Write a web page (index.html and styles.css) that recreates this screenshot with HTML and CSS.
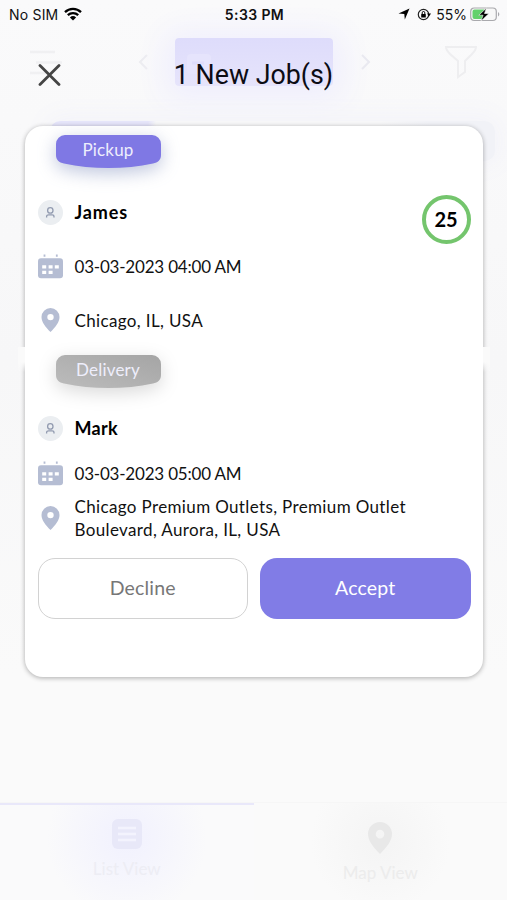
FILE: index.html
```
<!DOCTYPE html>
<html lang="en">
<head>
  <meta charset="UTF-8">
  <meta name="viewport" content="width=device-width, initial-scale=1.0">
  <title>New Jobs</title>
  <link rel="stylesheet" href="styles.css">
</head>
<body>
  <svg class="defs" width="0" height="0">
    <symbol id="user" viewBox="0 0 25 25">
      <circle cx="12.5" cy="12.5" r="12.5" fill="#ebeef1"/>
      <g fill="none" stroke="#929bb0" stroke-width="1.3">
        <circle cx="12.3" cy="10.4" r="2.7"/>
        <path d="M8.600 17.400v-.7c0-1.200.9-1.800 1.900-1.800h3.600c1 0 1.900.6 1.900 1.800v.7"/>
      </g>
    </symbol>
    <symbol id="calendar" viewBox="0 0 25 25">
      <path d="M6.500 .5v2.300M18.800 .5v2.300" stroke="#b5bdd3" stroke-width="1.800"/>
      <rect x="0" y="4.300" width="25" height="20" rx="3" fill="#b5bdd3"/>
      <path d="M4.200 11.300h4v3.200h-4zM10.600 11.300h4v3.200h-4zM16.800 11.300h4v3.200h-4zM4.200 16.800h4V20h-4zM10.600 16.800h4V20h-4z" fill="#fff"/>
    </symbol>
    <symbol id="pin" viewBox="0 0 18 24">
      <path fill-rule="evenodd" d="M9 0a9 9 0 0 0-9 9c0 5 4 10 9 15 5-5 9-10 9-15a9 9 0 0 0-9-9zm0 12.300a3.200 3.200 0 1 1 0-6.400 3.200 3.200 0 0 1 0 6.400z" fill="currentColor"/>
    </symbol>
  </svg>

  <div class="screen">
    <!-- job list screen, faded behind the popup -->
    <div class="behind">
      <div class="behind-header">
        <svg class="menu" width="34" height="26" viewBox="0 0 34 26"><path d="M1 2h25M7 12.500h26M1 23h16" stroke="#f0f0f2" stroke-width="2.500"/></svg>
        <svg class="prev" width="10" height="18" viewBox="0 0 10 18"><path d="M9 2L2 9l7 7" fill="none" stroke="#ececf0" stroke-width="2"/></svg>
        <div class="date-pill">
          <svg width="24" height="20" viewBox="0 0 24 20"><rect width="24" height="20" rx="4" fill="#e6e4fc"/><path d="M5 9h12" stroke="#dedcfb" stroke-width="3"/></svg>
        </div>
        <svg class="next" width="10" height="18" viewBox="0 0 10 18"><path d="M1 2l7 7-7 7" fill="none" stroke="#e9e9f0" stroke-width="2"/></svg>
        <svg class="filter" width="34" height="34" viewBox="0 0 34 34"><path d="M2 2h30c0 3-2 5-4 7l-7 7v11l-7 5V16L6 9C4 7 2 5 2 2z" fill="none" stroke="#eeeef0" stroke-width="2"/></svg>
      </div>
      <div class="behind-list"></div>
      <div class="tabs">
        <div class="tab active">
          <svg width="32" height="32" viewBox="0 0 32 32"><rect x="1" y="1" width="30" height="30" rx="6" fill="#e8e8f8"/><path d="M7 10h18M7 16h18M7 22h18" stroke="#f3f3fd" stroke-width="2.500"/></svg>
          <span>List View</span>
        </div>
        <div class="tab">
          <svg width="26" height="32"><use href="#pin"/></svg>
          <span>Map View</span>
        </div>
      </div>
    </div>

    <div class="popup">
      <div class="status">
        <div class="carrier">
          No SIM
          <svg width="18" height="14" viewBox="0 0 18 14"><path d="M1 5.200a11.500 11.500 0 0 1 16 0M3.800 8.200a7.500 7.500 0 0 1 10.400 0" fill="none" stroke="#000" stroke-width="2.300"/><path d="M5.900 10.400a4.500 4.500 0 0 1 6.200 0L9 13.600z"/></svg>
        </div>
        <div class="clock">5:33 PM</div>
        <div class="battery">
          <svg width="12" height="12" viewBox="0 0 12 12"><path d="M11.500 .5L6.800 11.500 6.300 6 .5 5.500z"/></svg>
          <svg class="lock" width="14" height="13" viewBox="0 0 14 13"><circle cx="6.500" cy="6.500" r="5.200" fill="none" stroke="#222" stroke-width="1.200"/><path d="M10 5.500h4l-2 3z"/><rect x="4.200" y="6" width="4.600" height="3.400" rx=".5"/><path d="M5.200 6V4.800a1.300 1.300 0 0 1 2.600 0V6" fill="none" stroke="#000"/></svg>
          <span>55%</span>
          <svg width="30" height="15" viewBox="0 0 30 15"><rect x=".7" y="1" width="25.600" height="12.500" rx="3.500" fill="#f8f8f8" stroke="#a9a9ad" stroke-width="1.200"/><path d="M4.500 2.500h9.500v9.500H4.500a2 2 0 0 1-2-2V4.500a2 2 0 0 1 2-2z" fill="#63d16c"/><path d="M28 5v4.500c1.800-.8 1.800-3.700 0-4.500z" fill="#a9a9ad"/><path d="M16.500 1L8.800 8.200h4.300L11 14l8-7.500h-4.500z" stroke="#fafafa" stroke-width=".6"/></svg>
        </div>
      </div>

      <div class="title-bar">
        <svg class="close" width="23" height="22" viewBox="0 0 23 22"><path d="M2 1.500l19 19M21 1.500l-19 19" stroke="#444" stroke-width="2.800" stroke-linecap="round"/></svg>
        <h1>1 New Job(s)</h1>
      </div>

      <div class="card">
        <div class="badge pickup">
          <svg width="105" height="34" viewBox="0 0 105 34"><path d="M9 0h87a9 9 0 0 1 9 9v11c0 5-3 7.500-8 8.500-28 6-61 6-89 0-5-1-8-3.500-8-8.500V9a9 9 0 0 1 9-9z" fill="#7f78e4"/></svg>
          <span>Pickup</span>
        </div>
        <div class="row">
          <svg width="25" height="25"><use href="#user"/></svg>
          <b class="james">James</b>
          <div class="timer">25</div>
        </div>
        <div class="row">
          <svg width="25" height="25"><use href="#calendar"/></svg>
          <span class="date">03-03-2023 04:00 AM</span>
        </div>
        <div class="row">
          <svg width="19" height="24"><use href="#pin"/></svg>
          <span class="place">Chicago, IL, USA</span>
        </div>
        <div class="badge delivery">
          <svg width="105" height="34" viewBox="0 0 105 34">
            <linearGradient id="grey" x1="0" y1="1" x2="1" y2="0"><stop offset="0" stop-color="#bcbcbc"/><stop offset="1" stop-color="#a5a5a5"/></linearGradient>
            <path d="M9 0h87a9 9 0 0 1 9 9v11c0 5-3 7.500-8 8.500-28 6-61 6-89 0-5-1-8-3.500-8-8.500V9a9 9 0 0 1 9-9z" fill="url(#grey)"/>
          </svg>
          <span>Delivery</span>
        </div>
        <div class="row">
          <svg width="25" height="25"><use href="#user"/></svg>
          <b>Mark</b>
        </div>
        <div class="row short">
          <svg width="25" height="25"><use href="#calendar"/></svg>
          <span class="date">03-03-2023 05:00 AM</span>
        </div>
        <div class="row address">
          <svg width="19" height="24"><use href="#pin"/></svg>
          <span class="place">Chicago Premium Outlets, Premium Outlet<br>Boulevard, Aurora, IL, USA</span>
        </div>
        <div class="buttons">
          <button class="decline">Decline</button>
          <button class="accept">Accept</button>
        </div>
      </div>
    </div>
  </div>
</body>
</html>
```
FILE: styles.css
```
* {
  box-sizing: border-box;
}
body {
  margin: 0;
  font-family: Lato, sans-serif;
  background-color: #fafafa;
}
svg {
  display: block;
  flex: none;
}
.defs {
  position: absolute;
}
.screen {
  position: relative;
  width: 507px;
  height: 900px;
  overflow: hidden;
}

/* faded screen */
.behind {
  display: flex;
  flex-direction: column;
  height: 900px;
  background: linear-gradient(#fafafb, #f7f7f8 40%, #fafafa 75%, #fafafa);
}
.behind-header {
  display: flex;
  align-items: center;
  height: 124px;
  padding-left: 29px;
}
.menu {
  margin-top: 1px;
}
.prev {
  margin-left: 75px;
}
.date-pill {
  width: 158px;
  height: 48px;
  margin-left: 27px;
  padding: 16px 0 0 12px;
  border-radius: 4px;
  background: linear-gradient(#dedcfb, #e6e4fb);
  box-shadow: 0 4px 32px 10px #efeefd;
}
.next {
  margin-left: 28px;
}
.filter {
  margin-left: 73px;
}
.behind-list {
  flex: 1;
  margin: -3px 12px 0 50px;
  border-radius: 10px;
  background: linear-gradient(90deg, #e6e5fa 98px, #f7f7f8 106px, #f7f7f8 330px, #f1f2f7 380px);
  max-height: 40px;
  box-shadow: 0 0 25px 5px #f3f3f9;
}
.tabs {
  display: flex;
  height: 98px;
  margin-top: auto;
  border-top: 1px solid #f6f6f6;
}
.tab {
  flex: 1;
  display: flex;
  flex-direction: column;
  align-items: center;
  padding-top: 19px;
  font-size: 17px;
  line-height: 20px;
  color: #e8e8e8;
  background: radial-gradient(circle at 50% 40%, #f4f4f4, #fafafa 70px);
}
.tab span {
  margin-top: 9px;
  color: #ececec;
}
.tab.active {
  padding-top: 13px;
  border-top: 2px solid #e9e8fa;
  background: radial-gradient(circle at 50% 35%, #f1f1fe, #fafafb 80px);
}
.tab.active span {
  color: #ededf4;
}

/* popup */
.popup {
  position: absolute;
  inset: 0;
}
.status {
  display: grid;
  grid-template-columns: 1fr 80px 1fr;
  align-items: center;
  height: 28px;
  padding: 0 7px 0 9px;
  font-family: Inter, sans-serif;
  font-size: 14px;
  color: #111;
}
.carrier, .battery {
  display: flex;
  align-items: center;
}
.carrier {
  gap: 6px;
  letter-spacing: 0.2px;
}
.clock {
  font-weight: 600;
  letter-spacing: 0.4px;
  text-align: center;
  white-space: nowrap;
}
.battery {
  justify-content: flex-end;
}
.lock {
  margin: 0 5px 0 7px;
}
.battery span {
  margin-right: 3px;
}
.title-bar {
  display: grid;
  grid-template-columns: 60px 1fr 60px;
  align-items: center;
  height: 94px;
}
.close {
  margin-left: 38px;
}
h1 {
  margin: 0;
  font-family: Roboto, sans-serif;
  font-size: 26.8px;
  font-weight: 400;
  text-align: center;
  color: #0c0c14;
}
.card {
  position: relative;
  width: 458px;
  height: 551px;
  margin: 4px 0 0 25px;
  padding: 9px 12.5px 0;
  border-radius: 18px;
  background-color: #fff;
  box-shadow: 0 1px 5px rgba(0, 0, 0, 0.32);
}
/* break in the shadow between pickup and delivery */
.card::before, .card::after {
  content: "";
  position: absolute;
  top: 221px;
  width: 7px;
  height: 25px;
  background: linear-gradient(#fafafa 60%, rgba(250, 250, 250, 0));
}
.card::before {
  left: -7px;
}
.card::after {
  right: -7px;
}
.badge {
  display: grid;
  width: 105px;
  height: 34px;
  margin-left: 18px;
}
.badge svg, .badge span {
  grid-area: 1 / 1;
}
.badge span {
  z-index: 1;
  text-align: center;
  font-size: 17px;
  line-height: 29px;
  letter-spacing: 0.2px;
  color: #eeeefc;
}
.pickup {
  margin-bottom: 16px;
}
.pickup svg {
  filter: drop-shadow(0 5px 9px rgba(90, 110, 170, 0.4));
}
.delivery {
  margin: 8px 0 12px 18px;
}
.delivery svg {
  filter: drop-shadow(0 5px 9px rgba(0, 0, 0, 0.15));
}
.row {
  display: grid;
  grid-template-columns: 25px 1fr auto;
  grid-template-rows: 100%;
  column-gap: 12px;
  align-items: center;
  justify-items: start;
  height: 54px;
  font-size: 17px;
  color: #111;
}
.row svg {
  justify-self: center;
  color: #b5bdd3;
}
.row b {
  font-size: 18px;
  letter-spacing: 0.3px;
  color: #000;
}
.row .james {
  letter-spacing: 0.9px;
}
.date {
  letter-spacing: -0.2px;
}
.place {
  letter-spacing: 0.36px;
}
.timer {
  display: grid;
  place-items: center;
  width: 49px;
  height: 49px;
  margin-top: 14px;
  border: 4px solid #74c56d;
  border-radius: 50%;
  font-size: 20px;
  font-weight: 700;
  color: #000;
}
.row.short {
  height: 36px;
}
.row.address {
  height: 54px;
  line-height: 23.5px;
}
.buttons {
  display: grid;
  grid-template-columns: 1fr 1fr;
  gap: 12px;
  margin-top: 13px;
}
button {
  height: 61px;
  padding: 0 0 2px;
  border: 1px solid #d2d2d2;
  border-radius: 17px;
  background-color: #fff;
  font-family: Lato, sans-serif;
  font-size: 19.5px;
  letter-spacing: 0.2px;
  color: #777;
}
.accept {
  border: none;
  background-color: #817ce6;
  color: #fff;
}
```
